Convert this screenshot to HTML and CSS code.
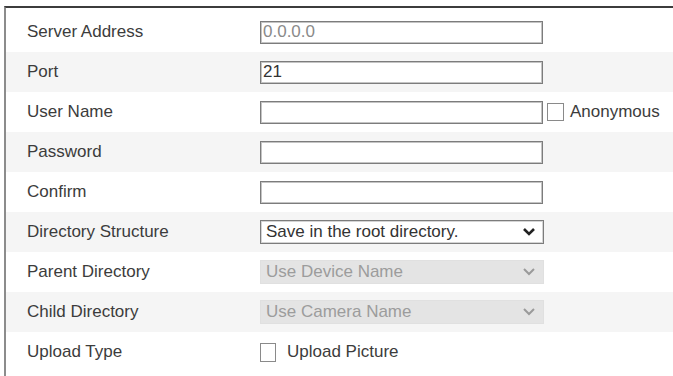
FILE: index.html
```html
<!DOCTYPE html>
<html lang="en">
<head>
    <meta charset="UTF-8">
    <title>FTP</title>
    <link rel="stylesheet" href="styles.css">
</head>
<body>
    <div class="panel">
        <div class="row">
            <div class="label">Server Address</div>
            <div class="field"><input class="text-input muted" type="text" value="0.0.0.0"></div>
        </div>
        <div class="row alt">
            <div class="label">Port</div>
            <div class="field"><input class="text-input" type="text" value="21"></div>
        </div>
        <div class="row">
            <div class="label">User Name</div>
            <div class="field">
                <input class="text-input" type="text">
                <label class="check"><span class="box"></span>Anonymous</label>
            </div>
        </div>
        <div class="row alt">
            <div class="label">Password</div>
            <div class="field"><input class="text-input" type="password"></div>
        </div>
        <div class="row">
            <div class="label">Confirm</div>
            <div class="field"><input class="text-input" type="password"></div>
        </div>
        <div class="row alt">
            <div class="label">Directory Structure</div>
            <div class="field">
                <div class="select">
                    <span>Save in the root directory.</span>
                    <svg class="chevron" width="14" height="10" viewBox="0 0 14 10"><path d="M2 2 L7 7 L12 2" fill="none" stroke="#222" stroke-width="2.6"/></svg>
                </div>
            </div>
        </div>
        <div class="row">
            <div class="label">Parent Directory</div>
            <div class="field">
                <div class="select disabled">
                    <span>Use Device Name</span>
                    <svg class="chevron" width="14" height="10" viewBox="0 0 14 10"><path d="M2 2 L7 7 L12 2" fill="none" stroke="#9a9a9a" stroke-width="2"/></svg>
                </div>
            </div>
        </div>
        <div class="row alt">
            <div class="label">Child Directory</div>
            <div class="field">
                <div class="select disabled">
                    <span>Use Camera Name</span>
                    <svg class="chevron" width="14" height="10" viewBox="0 0 14 10"><path d="M2 2 L7 7 L12 2" fill="none" stroke="#9a9a9a" stroke-width="2"/></svg>
                </div>
            </div>
        </div>
        <div class="row">
            <div class="label">Upload Type</div>
            <div class="field">
                <label class="check upload"><span class="box"></span>Upload Picture</label>
            </div>
        </div>
    </div>
</body>
</html>
```

FILE: styles.css
```css
* {
    margin: 0;
    padding: 0;
    box-sizing: border-box;
}

body {
    background: #ffffff;
    font-family: "Liberation Sans", Arial, sans-serif;
    color: #3a3a3a;
    font-size: 17px;
}

.panel {
    margin: 6px 0 0 4px;
    border-top: 2px solid #3c3c3c;
    border-left: 2px solid #8c8c8c;
    padding-top: 4px;
    height: 370px;
}

.row {
    display: grid;
    grid-template-columns: 254px 1fr;
    align-items: center;
    height: 40px;
}

.row.alt {
    background: #f5f5f5;
}

.label {
    padding-left: 21px;
    color: #3c3c3c;
}

.field {
    display: flex;
    align-items: center;
}

.text-input {
    width: 283px;
    height: 23px;
    border: 1px solid #7c7c7c;
    box-shadow: inset 0 0 0 1px #c4c4c4;
    background: #fff;
    font-family: inherit;
    font-size: 17px;
    color: #333;
    padding: 0 2px;
    outline: none;
}

.text-input.muted {
    color: #8a8a8a;
}

.check {
    display: flex;
    align-items: center;
    color: #3c3c3c;
}

.box {
    width: 17px;
    height: 18px;
    border: 1px solid #8a8a8a;
    background: #fff;
    margin: 0 6px 0 4px;
}

.check.upload .box {
    margin: 0 11px 0 0;
    width: 16px;
    height: 19px;
}

.select {
    width: 284px;
    height: 24px;
    border: 1px solid #7c7c7c;
    box-shadow: inset 0 0 0 1px #d4d4d4;
    background: #fff;
    display: flex;
    align-items: center;
    justify-content: space-between;
    padding: 0 7px 0 5px;
    color: #333;
}

.select.disabled {
    background: #e4e4e4;
    border-color: #e0e0e0;
    box-shadow: none;
    color: #9c9c9c;
}
```
